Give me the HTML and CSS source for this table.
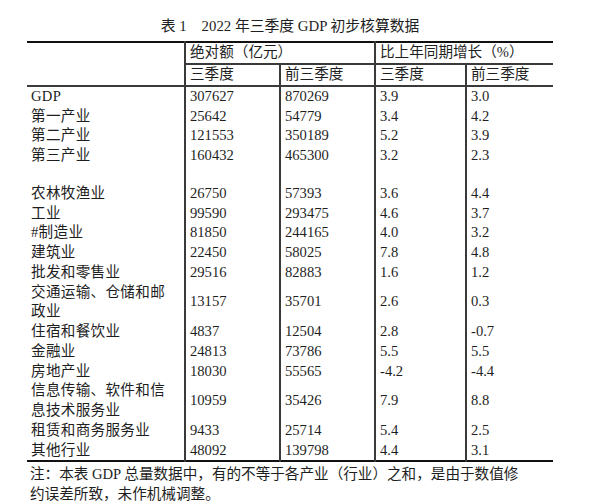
FILE: index.html
```html
<!DOCTYPE html>
<html lang="zh-CN">
<head>
    <meta charset="UTF-8">
    <title>2022年三季度 GDP 初步核算数据</title>
    <link rel="stylesheet" href="styles.css">
</head>
<body>
    <div class="page">
        <!-- Title -->
        <h1 class="caption">表 1<span class="gap"></span>2022 年三季度 GDP 初步核算数据</h1>

        <!-- Data Table -->
        <table class="gdp-table">
            <colgroup>
                <col class="col-name">
                <col class="col-abs">
                <col class="col-abs2">
                <col class="col-rate">
                <col class="col-rate2">
            </colgroup>
            <thead>
                <tr class="head-top">
                    <th rowspan="2" class="name"></th>
                    <th colspan="2" class="group">绝对额（亿元）</th>
                    <th colspan="2" class="group">比上年同期增长（%）</th>
                </tr>
                <tr class="head-sub">
                    <th>三季度</th>
                    <th class="split">前三季度</th>
                    <th>三季度</th>
                    <th class="split">前三季度</th>
                </tr>
            </thead>
            <tbody>
                <tr><td class="name">GDP</td><td>307627</td><td class="split">870269</td><td>3.9</td><td class="split">3.0</td></tr>
                <tr><td class="name">第一产业</td><td>25642</td><td class="split">54779</td><td>3.4</td><td class="split">4.2</td></tr>
                <tr><td class="name">第二产业</td><td>121553</td><td class="split">350189</td><td>5.2</td><td class="split">3.9</td></tr>
                <tr><td class="name">第三产业</td><td>160432</td><td class="split">465300</td><td>3.2</td><td class="split">2.3</td></tr>
                <tr class="blank"><td class="name"></td><td></td><td class="split"></td><td></td><td class="split"></td></tr>
                <tr><td class="name">农林牧渔业</td><td>26750</td><td class="split">57393</td><td>3.6</td><td class="split">4.4</td></tr>
                <tr><td class="name">工业</td><td>99590</td><td class="split">293475</td><td>4.6</td><td class="split">3.7</td></tr>
                <tr><td class="name">#制造业</td><td>81850</td><td class="split">244165</td><td>4.0</td><td class="split">3.2</td></tr>
                <tr><td class="name">建筑业</td><td>22450</td><td class="split">58025</td><td>7.8</td><td class="split">4.8</td></tr>
                <tr><td class="name">批发和零售业</td><td>29516</td><td class="split">82883</td><td>1.6</td><td class="split">1.2</td></tr>
                <tr><td class="name">交通运输、仓储和邮<br>政业</td><td>13157</td><td class="split">35701</td><td>2.6</td><td class="split">0.3</td></tr>
                <tr><td class="name">住宿和餐饮业</td><td>4837</td><td class="split">12504</td><td>2.8</td><td class="split">-0.7</td></tr>
                <tr><td class="name">金融业</td><td>24813</td><td class="split">73786</td><td>5.5</td><td class="split">5.5</td></tr>
                <tr><td class="name">房地产业</td><td>18030</td><td class="split">55565</td><td>-4.2</td><td class="split">-4.4</td></tr>
                <tr><td class="name">信息传输、软件和信<br>息技术服务业</td><td>10959</td><td class="split">35426</td><td>7.9</td><td class="split">8.8</td></tr>
                <tr><td class="name">租赁和商务服务业</td><td>9433</td><td class="split">25714</td><td>5.4</td><td class="split">2.5</td></tr>
                <tr><td class="name">其他行业</td><td>48092</td><td class="split">139798</td><td>4.4</td><td class="split">3.1</td></tr>
            </tbody>
        </table>

        <!-- Footnote -->
        <p class="note">注：本表 GDP 总量数据中，有的不等于各产业（行业）之和，是由于数值修<br>约误差所致，未作机械调整。</p>
    </div>
</body>
</html>
```

FILE: styles.css
```css
/* General Reset */
* {
    margin: 0;
    padding: 0;
    box-sizing: border-box;
}

body {
    background-color: #fff;
    color: #1e1e1e;
    font-family: 'Liberation Serif', 'Noto Sans CJK SC', serif;
    font-size: 14.6px;
}

.page {
    width: 526px;
    margin-left: 27px;
    padding-top: 16px;
}

/* Title */
.caption {
    font-size: 14.8px;
    font-weight: normal;
    line-height: 20px;
    text-align: center;
    margin-bottom: 5px;
}

.caption .gap {
    display: inline-block;
    width: 15px;
}

/* Table */
.gdp-table {
    width: 526px;
    table-layout: fixed;
    border-collapse: collapse;
    border-top: 2px solid #111;
    border-bottom: 2px solid #111;
}

.col-name { width: 158px; }
.col-abs { width: 95px; }
.col-abs2 { width: 95px; }
.col-rate { width: 91px; }
.col-rate2 { width: 87px; }

.gdp-table th,
.gdp-table td {
    font-weight: normal;
    text-align: left;
    vertical-align: middle;
    white-space: nowrap;
    padding: 0 3px 0 4px;
    line-height: 19.75px;
}

.gdp-table th {
    border-left: 2px solid #3a3a3a;
}

.gdp-table th.name {
    border-left: none;
    border-bottom: 2px solid #3a3a3a;
}

.head-top th {
    height: 21px;
}

.head-top th.group {
    border-bottom: 2px solid #3a3a3a;
    padding-left: 4px;
}

.head-sub th {
    height: 22px;
    border-bottom: 2px solid #3a3a3a;
}

.gdp-table td {
    border-left: 2px solid #3a3a3a;
}

.gdp-table td.name {
    border-left: none;
    letter-spacing: 0.3px;
}

.gdp-table tr.blank td {
    height: 18px;
}

/* Footnote */
.note {
    padding-left: 3px;
    margin-top: 3px;
    line-height: 19.5px;
    font-size: 14.6px;
}
```
